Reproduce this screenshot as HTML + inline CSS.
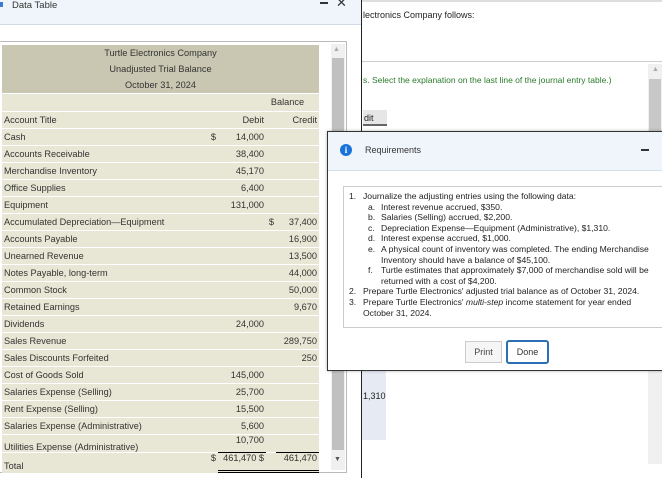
<!DOCTYPE html>
<html><head><style>
*{margin:0;padding:0;box-sizing:border-box}
body{width:662px;height:478px;overflow:hidden;background:#fff;font-family:"Liberation Sans",sans-serif;position:relative;font-size:9px;color:#222}
.abs{position:absolute}
table{border-collapse:collapse}
td{height:17px;padding:0 2px;font-size:9.2px;color:#333;border-top:1px solid #fff;white-space:nowrap}
.r{text-align:right}
.req div, .req span{line-height:10.6px}
</style></head><body>
<div class="abs" style="left:362px;top:0;width:300px;height:2px;background:#ddd"></div>
<div class="abs" style="left:363px;top:10px;font-size:9px;color:#222">lectronics Company follows:</div>
<div class="abs" style="left:362px;top:61px;width:300px;height:1px;background:#ccc"></div>
<div class="abs" style="left:363px;top:75px;font-size:8.5px;color:#2a7a2a">s. Select the explanation on the last line of the journal entry table.)</div>
<div class="abs" style="left:363px;top:110px;width:24px;height:16px;background:#e6e6e6;border-bottom:2px solid #666;font-size:9px;padding:3px 0 0 1px">dit</div>
<div class="abs" style="left:648px;top:64px;width:14px;height:400px;background:#f0f0f0"></div>
<div class="abs" style="left:652px;top:66px;font-size:7px;color:#aaa">▲</div>
<div class="abs" style="left:649px;top:79px;width:12px;height:60px;background:#c8c8c8"></div>
<div class="abs" style="left:362px;top:370px;width:24px;height:70px;background:#e6eaf3"></div>
<div class="abs" style="left:363px;top:391px;font-size:9px">1,310</div>

<div class="abs" style="left:0;top:0;width:362px;height:478px;background:#fff;border-right:1px solid #222">
 <div class="abs" style="left:0;top:0;width:361px;height:25px;background:#f0f5fb;border-bottom:1px solid #cfdbe6"></div>
 <div class="abs" style="left:0;top:2px;width:3px;height:5px;background:#3a7bd5"></div>
 <div class="abs" style="left:12px;top:0;font-size:9.5px;color:#333">Data Table</div>
 <div class="abs" style="left:320px;top:2px;width:8px;height:2px;background:#333"></div>
 <div class="abs" style="left:336px;top:-5px;font-size:13px;color:#333">✕</div>
 <div class="abs" style="left:0;top:41px;width:347px;height:432px;border:1px solid #bbb;border-left:none"></div>
 <div class="abs" style="left:331px;top:44px;width:14px;height:426px;background:#f0f0f0"></div>
 <div class="abs" style="left:333px;top:46px;font-size:7px;color:#aaa">▲</div>
 <div class="abs" style="left:332px;top:58px;width:12px;height:392px;background:#c0c0c0"></div>
 <div class="abs" style="left:334px;top:456px;font-size:7px;color:#555">▼</div>
 <table class="abs" style="left:2px;top:45px;width:317px;background:#e8e6d4">
  <tr style="background:#c9c7b1"><td colspan="5" style="text-align:center;height:16px;border:0">Turtle Electronics Company</td></tr>
  <tr style="background:#c9c7b1"><td colspan="5" style="text-align:center;height:16px;border:0">Unadjusted Trial Balance</td></tr>
  <tr style="background:#c9c7b1"><td colspan="5" style="text-align:center;height:16px;border:0">October 31, 2024</td></tr>
  <tr><td style="height:18px"></td><td colspan="4" style="text-align:center;padding-left:60px">Balance</td></tr>
  <tr><td style="width:196px">Account Title</td><td style="width:20px"></td><td class="r" style="width:48px">Debit</td><td style="width:10px"></td><td class="r" style="width:43px">Credit</td></tr>
  <tr><td>Cash</td><td class="r">$</td><td class="r">14,000</td><td></td><td></td></tr>
  <tr><td>Accounts Receivable</td><td></td><td class="r">38,400</td><td></td><td></td></tr>
  <tr><td>Merchandise Inventory</td><td></td><td class="r">45,170</td><td></td><td></td></tr>
  <tr><td>Office Supplies</td><td></td><td class="r">6,400</td><td></td><td></td></tr>
  <tr><td>Equipment</td><td></td><td class="r">131,000</td><td></td><td></td></tr>
  <tr><td>Accumulated Depreciation—Equipment</td><td></td><td></td><td class="r">$</td><td class="r">37,400</td></tr>
  <tr><td>Accounts Payable</td><td></td><td></td><td></td><td class="r">16,900</td></tr>
  <tr><td>Unearned Revenue</td><td></td><td></td><td></td><td class="r">13,500</td></tr>
  <tr><td>Notes Payable, long-term</td><td></td><td></td><td></td><td class="r">44,000</td></tr>
  <tr><td>Common Stock</td><td></td><td></td><td></td><td class="r">50,000</td></tr>
  <tr><td>Retained Earnings</td><td></td><td></td><td></td><td class="r">9,670</td></tr>
  <tr><td>Dividends</td><td></td><td class="r">24,000</td><td></td><td></td></tr>
  <tr><td>Sales Revenue</td><td></td><td></td><td></td><td class="r">289,750</td></tr>
  <tr><td>Sales Discounts Forfeited</td><td></td><td></td><td></td><td class="r">250</td></tr>
  <tr><td>Cost of Goods Sold</td><td></td><td class="r">145,000</td><td></td><td></td></tr>
  <tr><td>Salaries Expense (Selling)</td><td></td><td class="r">25,700</td><td></td><td></td></tr>
  <tr><td>Rent Expense (Selling)</td><td></td><td class="r">15,500</td><td></td><td></td></tr>
  <tr><td>Salaries Expense (Administrative)</td><td></td><td class="r">5,600</td><td></td><td></td></tr>
  <tr><td style="vertical-align:bottom;height:18px">Utilities Expense (Administrative)</td><td></td><td class="r" style="border-bottom:1px solid #000;vertical-align:top">10,700</td><td></td><td style="border-bottom:1px solid #000"></td></tr>
  <tr><td style="vertical-align:bottom;height:19px">Total</td><td class="r" style="vertical-align:top">$</td><td class="r" style="border-bottom:3px double #000;vertical-align:top">461,470 $</td><td colspan="2" class="r" style="border-bottom:3px double #000;vertical-align:top">461,470</td></tr>
 </table>
</div>

<div class="abs" style="left:327px;top:131px;width:340px;height:240px;background:#fff;border:1px solid #333;box-shadow:0 0 3px rgba(0,0,0,.3)">
 <div class="abs" style="left:0;top:0;width:340px;height:39px;background:#f0f5fb;border-bottom:1px solid #d6e0ea"></div>
 <div class="abs" style="left:12px;top:12px;width:12px;height:12px;border-radius:50%;background:#1a73d9;color:#fff;font-size:9px;font-weight:bold;text-align:center;line-height:12px;font-family:'Liberation Serif',serif">i</div>
 <div class="abs" style="left:37px;top:13px;font-size:9px;color:#333">Requirements</div>
 <div class="abs" style="left:313px;top:17px;width:8px;height:2px;background:#333"></div>
 <div class="abs req" style="left:15px;top:54px;width:330px;height:142px;border:1px solid #ccc;font-size:8.6px;color:#222;padding:4px 0 0 5px">
  <div style="display:flex"><span style="width:14px">1.</span><span>Journalize the adjusting entries using the following data:</span></div>
  <div style="padding-left:19px">
   <div style="display:flex"><span style="width:13px">a.</span><span>Interest revenue accrued, $350.</span></div>
   <div style="display:flex"><span style="width:13px">b.</span><span>Salaries (Selling) accrued, $2,200.</span></div>
   <div style="display:flex"><span style="width:13px">c.</span><span>Depreciation Expense—Equipment (Administrative), $1,310.</span></div>
   <div style="display:flex"><span style="width:13px">d.</span><span>Interest expense accrued, $1,000.</span></div>
   <div style="display:flex"><span style="width:13px">e.</span><span>A physical count of inventory was completed. The ending Merchandise<br>Inventory should have a balance of $45,100.</span></div>
   <div style="display:flex"><span style="width:13px">f.</span><span>Turtle estimates that approximately $7,000 of merchandise sold will be<br>returned with a cost of $4,200.</span></div>
  </div>
  <div style="display:flex"><span style="width:14px">2.</span><span>Prepare Turtle Electronics' adjusted trial balance as of October 31, 2024.</span></div>
  <div style="display:flex"><span style="width:14px">3.</span><span>Prepare Turtle Electronics' <i>multi-step</i> income statement for year ended<br>October 31, 2024.</span></div>
 </div>
 <div class="abs" style="left:137px;top:209px;width:37px;height:22px;border:1px solid #ccc;background:#f6f6f6;font-size:9px;text-align:center;line-height:20px;color:#444">Print</div>
 <div class="abs" style="left:178px;top:208px;width:43px;height:24px;border:2px solid #2d6fb5;border-radius:3px;background:#fff;font-size:9px;text-align:center;line-height:20px;color:#333">Done</div>
</div>
</body></html>
